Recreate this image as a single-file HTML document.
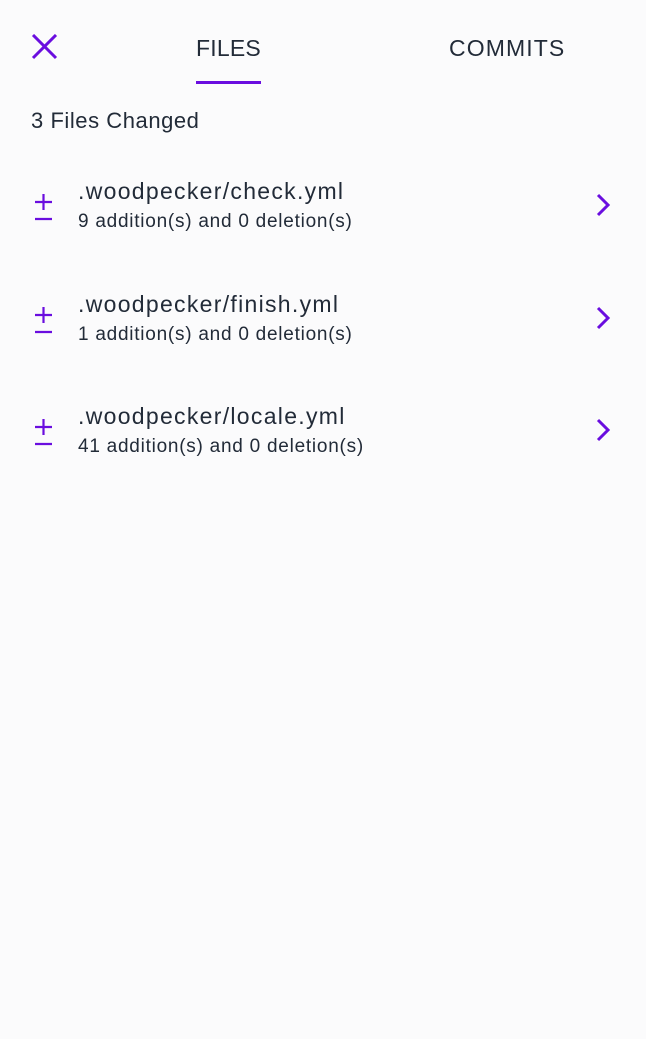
<!DOCTYPE html>
<html><head><meta charset="utf-8"><style>
body{margin:0;width:646px;height:1039px;background:#fbfbfc;font-family:"Liberation Sans",sans-serif;color:#222b38;position:relative;overflow:hidden}
.a{position:absolute}
.t{font-size:23px;letter-spacing:0.2px}
.r1{font-size:23px;letter-spacing:1.3px}
.r2{font-size:19px;letter-spacing:0.75px}
</style></head><body>
<svg class="a" style="left:31px;top:34px" width="27" height="26" viewBox="0 0 27 26"><path d="M2 1L25 24M25 1L2 24" stroke="#6a0ddf" stroke-width="3"/></svg>
<div class="a t" style="left:196px;top:35px">FILES</div>
<div class="a" style="left:196px;top:81px;width:65px;height:3px;background:#6a0ddf"></div>
<div class="a t" style="left:449px;top:35px;letter-spacing:1.1px">COMMITS</div>
<div class="a" style="left:31px;top:108px;font-size:22px;letter-spacing:0.55px">3 Files Changed</div>

<div class="a" style="left:0;top:176px;width:646px">
<svg class="a" style="left:33px;top:15px" width="22" height="30"><path d="M2 11H19M10.5 3V19M2 28H19" stroke="#6a0ddf" stroke-width="2.2"/></svg>
<div class="a r1" style="left:78px;top:2px">.woodpecker/check.yml</div>
<div class="a r2" style="left:78px;top:35px">9 addition(s) and 0 deletion(s)</div>
<svg class="a" style="left:594px;top:17px" width="18" height="24"><path d="M4 2L14 12L4 22" fill="none" stroke="#6a0ddf" stroke-width="3"/></svg>
</div>
<div class="a" style="left:0;top:289px;width:646px">
<svg class="a" style="left:33px;top:15px" width="22" height="30"><path d="M2 11H19M10.5 3V19M2 28H19" stroke="#6a0ddf" stroke-width="2.2"/></svg>
<div class="a r1" style="left:78px;top:2px">.woodpecker/finish.yml</div>
<div class="a r2" style="left:78px;top:35px">1 addition(s) and 0 deletion(s)</div>
<svg class="a" style="left:594px;top:17px" width="18" height="24"><path d="M4 2L14 12L4 22" fill="none" stroke="#6a0ddf" stroke-width="3"/></svg>
</div>
<div class="a" style="left:0;top:401px;width:646px">
<svg class="a" style="left:33px;top:15px" width="22" height="30"><path d="M2 11H19M10.5 3V19M2 28H19" stroke="#6a0ddf" stroke-width="2.2"/></svg>
<div class="a r1" style="left:78px;top:2px">.woodpecker/locale.yml</div>
<div class="a r2" style="left:78px;top:35px">41 addition(s) and 0 deletion(s)</div>
<svg class="a" style="left:594px;top:17px" width="18" height="24"><path d="M4 2L14 12L4 22" fill="none" stroke="#6a0ddf" stroke-width="3"/></svg>
</div>
</body></html>
